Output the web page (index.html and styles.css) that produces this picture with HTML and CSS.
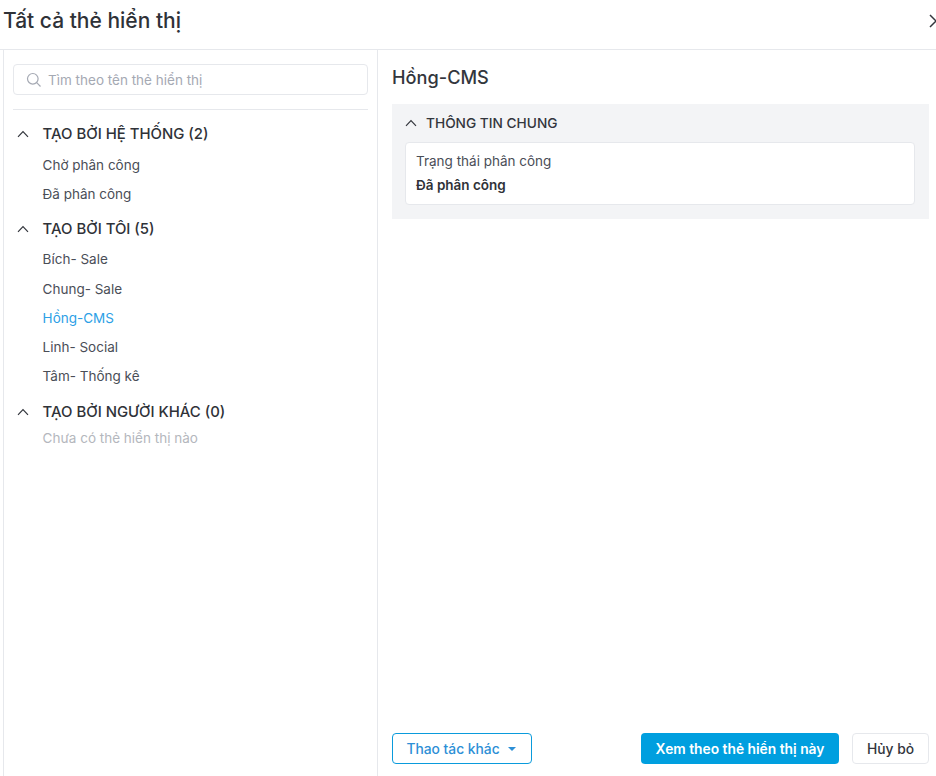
FILE: index.html
```html
<!DOCTYPE html>
<html lang="vi">
<head>
<meta charset="utf-8">
<title>Tất cả thẻ hiển thị</title>
<link rel="stylesheet" href="styles.css">
</head>
<body>
<div class="modal">
  <header class="head">
    <h1 class="title">Tất cả thẻ hiển thị</h1>
    <svg class="close" width="16" height="16" viewBox="0 0 16 16"><path d="M2 2 L14 14 M14 2 L2 14" fill="none" stroke="#33363d" stroke-width="1.5"/></svg>
  </header>
  <div class="body">
    <aside class="side">
      <div class="search">
        <svg width="16" height="16" viewBox="0 0 16 16"><circle cx="6.8" cy="6.8" r="5.3" fill="none" stroke="#a5a9b3" stroke-width="1.2"/><path d="M10.7 10.7 L14.5 14.5" stroke="#a5a9b3" stroke-width="1.2"/></svg>
        <span>Tìm theo tên thẻ hiển thị</span>
      </div>
      <div class="rule"></div>
      <section class="group first">
        <div class="ghead"><svg class="chev" width="12" height="8" viewBox="0 0 12 8"><path d="M1 6.8 L6 1.6 L11 6.8" fill="none" stroke="#33363d" stroke-width="1.2"/></svg><span>TẠO BỞI HỆ THỐNG (2)</span></div>
        <div class="item">Chờ phân công</div>
        <div class="item">Đã phân công</div>
      </section>
      <section class="group">
        <div class="ghead"><svg class="chev" width="12" height="8" viewBox="0 0 12 8"><path d="M1 6.8 L6 1.6 L11 6.8" fill="none" stroke="#33363d" stroke-width="1.2"/></svg><span>TẠO BỞI TÔI (5)</span></div>
        <div class="item">Bích- Sale</div>
        <div class="item">Chung- Sale</div>
        <div class="item active">Hồng-CMS</div>
        <div class="item">Linh- Social</div>
        <div class="item">Tâm- Thống kê</div>
      </section>
      <section class="group last">
        <div class="ghead"><svg class="chev" width="12" height="8" viewBox="0 0 12 8"><path d="M1 6.8 L6 1.6 L11 6.8" fill="none" stroke="#33363d" stroke-width="1.2"/></svg><span>TẠO BỞI NGƯỜI KHÁC (0)</span></div>
        <div class="empty">Chưa có thẻ hiển thị nào</div>
      </section>
    </aside>
    <main class="main">
      <h2 class="name">Hồng-CMS</h2>
      <section class="panel">
        <div class="phead"><svg class="chev" width="12" height="8" viewBox="0 0 12 8"><path d="M1 6.8 L6 1.6 L11 6.8" fill="none" stroke="#33363d" stroke-width="1.2"/></svg><span>THÔNG TIN CHUNG</span></div>
        <div class="card">
          <div class="label">Trạng thái phân công</div>
          <div class="value">Đã phân công</div>
        </div>
      </section>
      <footer class="foot">
        <button class="btn outline">Thao tác khác<i class="caret"></i></button>
        <div class="right">
          <button class="btn primary">Xem theo thẻ hiển thị này</button>
          <button class="btn ghost">Hủy bỏ</button>
        </div>
      </footer>
    </main>
  </div>
</div>
</body>
</html>
```
FILE: styles.css
```css
* { box-sizing: border-box; }
html, body { margin: 0; height: 776px; overflow: hidden; background: #fff; }
body { font-family: Inter, "Noto Sans", sans-serif; color: #33363d; font-size: 13.5px; }
.modal { width: 936px; height: 776px; display: flex; flex-direction: column; }
.head { height: 50px; flex: none; padding: 0 0 0 3px; border-bottom: 1px solid #e6e8ec; display: flex; justify-content: space-between; align-items: flex-start; overflow: hidden; }
.title { margin: 7px 0 0; font-size: 21px; line-height: 27px; font-weight: 500; color: #2f3238; }
.close { margin: 13px -8px 0 0; flex: none; }
.body { flex: 1; display: flex; padding-left: 3px; min-height: 0; }
.side { width: 375px; flex: none; border-left: 1px solid #e6e8ec; border-right: 1px solid #e6e8ec; padding: 14px 9px 0 9px; }
.search { height: 31px; border: 1px solid #e6e8ec; border-radius: 4px; display: flex; align-items: center; gap: 6px; padding-left: 12px; color: #a5a9b3; }
.rule { height: 1px; background: #e6e8ec; margin-top: 14px; }
.group { padding-bottom: 2.8px; }
.group.first { margin-top: 7px; padding-bottom: 2.6px; }
.group.last { margin-top: 1px; }
.ghead { height: 33.7px; display: flex; align-items: center; gap: 13.6px; padding-left: 4px; font-size: 14.9px; font-weight: 500; color: #2f3238; }
.item { height: 29.2px; line-height: 29px; padding-left: 29.6px; color: #4a4e57; }
.item.active { color: #2d9fe6; }
.empty { padding-left: 29.6px; line-height: 18px; color: #b4b7bd; }
.main { flex: 1; min-width: 0; padding: 0 7px 0 14px; display: flex; flex-direction: column; }
.name { margin: 16px 0 1px; font-size: 18.2px; line-height: 22px; font-weight: 500; color: #33363d; }
.panel { margin-top: 15px; height: 115px; background: #f3f4f6; padding: 0 14px 0 13px; }
.phead { height: 38px; display: flex; align-items: center; gap: 9px; font-size: 13.7px; font-weight: 500; color: #33363d; }
.card { height: 63px; background: #fff; border: 1px solid #e6e8ec; border-radius: 4px; padding: 8px 10px; }
.label { line-height: 20px; color: #4a4e57; }
.value { line-height: 20px; margin-top: 4px; font-weight: 600; color: #2f3238; }
.foot { margin-top: auto; margin-bottom: 12px; display: flex; justify-content: space-between; }
.right { display: flex; gap: 13px; }
.btn { height: 31px; border-radius: 4px; font-family: inherit; font-size: 13.8px; font-weight: 500; padding: 0; background: #fff; display: flex; align-items: center; white-space: nowrap; }
.outline { width: 140px; border: 1px solid #0a9bdc; color: #2d8fd6; justify-content: center; gap: 8px; padding-right: 2px; }
.primary { width: 198px; justify-content: center; border: 0; background: #009fdf; color: #fff; font-weight: 600; }
.ghost { width: 77px; justify-content: center; border: 1px solid #e6e8ec; color: #33363d; }
.caret { width: 0; height: 0; border-left: 4px solid transparent; border-right: 4px solid transparent; border-top: 4px solid #2d8fd6; }
```
